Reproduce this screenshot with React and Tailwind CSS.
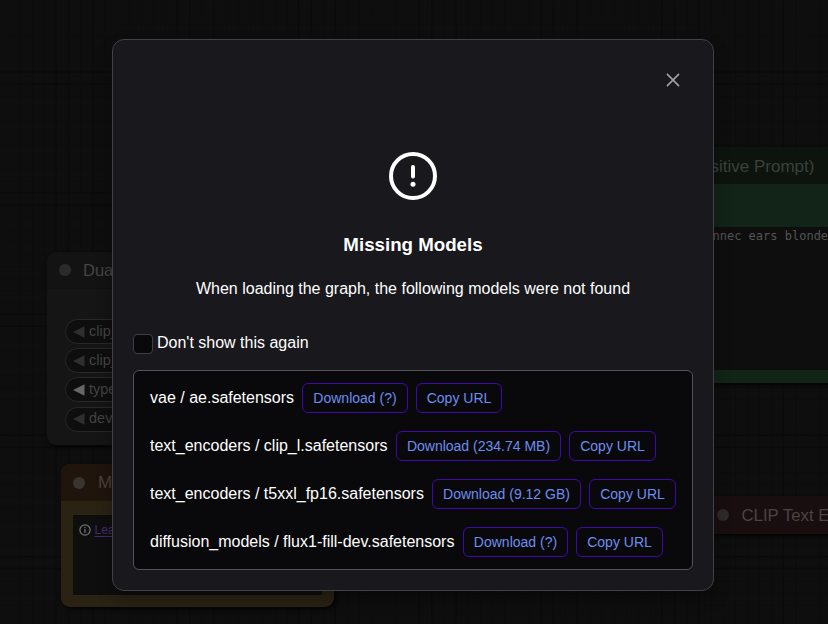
const models = [
  { name: "vae / ae.safetensors", size: "?", label: "w-[144px]", download: "w-[106px]", copy: "w-[86px]" },
  { name: "text_encoders / clip_l.safetensors", size: "234.74 MB", label: "w-[238px]", download: "w-[165px]", copy: "w-[87px]" },
  { name: "text_encoders / t5xxl_fp16.safetensors", size: "9.12 GB", label: "w-[274px]", download: "w-[149px]", copy: "w-[87px]" },
  { name: "diffusion_models / flux1-fill-dev.safetensors", size: "?", label: "w-[305px]", download: "w-[105px]", copy: "w-[87px]" },
];

const loaderRows = [
  { label: "clip_", arrow: "#2f2f2f" },
  { label: "clip_", arrow: "#2f2f2f" },
  { label: "type", arrow: "#666666" },
  { label: "dev", arrow: "#2f2f2f" },
];

// Graph canvas grid: fine cells with heavier lines once per block.
function Grid() {
  return (
    <svg className="absolute inset-0" width="828" height="624" aria-hidden="true">
      <defs>
        <pattern id="fine" x="7.7" y="-0.8" width="12.12" height="12.12" patternUnits="userSpaceOnUse">
          <path d="M0.5 0V12.12M0 0.5H12.12" stroke="#0c0c0c" strokeWidth="1" />
        </pattern>
        <pattern id="block" x="0" y="0" width="121.2" height="121.2" patternUnits="userSpaceOnUse">
          <path
            d="M56 0V121.2M68.3 0V121.2M92.5 0V121.2M0 71.7H121.2M0 83.8H121.2"
            stroke="#0a0a0a"
            strokeWidth="1.5"
          />
        </pattern>
      </defs>
      <rect width="828" height="624" fill="#0e0e0e" />
      <rect width="828" height="624" fill="url(#fine)" />
      <rect width="828" height="624" fill="url(#block)" />
    </svg>
  );
}

function LoaderNode() {
  return (
    <div className="absolute left-[47px] top-[252px] h-[193px] w-[240px] overflow-hidden rounded-[9px] bg-[#151515] shadow-[2px_2px_4px_#050505]">
      <div className="flex h-[37px] items-center gap-3 border-b border-[#101010] bg-[#131313] pl-3">
        <span className="size-3 rounded-full bg-[#2b2b2b]" />
        <span className="pt-px text-[16.5px] text-[#444444]">Dua</span>
      </div>
      <div className="flex flex-col gap-[4.2px] pl-[18px] pt-[30px]">
        {loaderRows.map((row, i) => (
          <div
            key={i}
            className="flex h-[25px] items-center gap-[4.5px] rounded-full border border-[#282828] bg-[#0e0e0e] pl-[6.5px] text-[14.5px] text-[#434343]"
          >
            <svg width="12" height="12" viewBox="0 0 12 12">
              <path d="M0 6L11.5 0.3V11.7Z" fill={row.arrow} />
            </svg>
            <span>{row.label}</span>
          </div>
        ))}
      </div>
    </div>
  );
}

function NoteNode() {
  return (
    <div className="absolute left-[61px] top-[464px] h-[143px] w-[273px] overflow-hidden rounded-[9px] bg-[#2a2213] shadow-[2px_2px_4px_#050505]">
      <div className="flex h-[37px] items-center gap-[13px] bg-[#20150d] pl-3">
        <span className="size-3 rounded-full bg-[#38342e]" />
        <span className="pt-px text-[17px] text-[#4a4239]">M</span>
      </div>
      <div className="ml-3 mt-[14px] flex h-[80px] w-[249px] items-start gap-[3.5px] bg-[#0e0e0e] pl-[6px] pt-[7px]">
        <svg className="mt-[2px]" width="12" height="12" viewBox="0 0 12 12" fill="none" stroke="#707070" strokeWidth="1.3">
          <circle cx="6" cy="6" r="5.1" />
          <path d="M6 5.1V9M6 3V4.2" />
        </svg>
        <span className="text-[12px] leading-4 text-[#442b6b] underline underline-offset-2">Lea</span>
      </div>
    </div>
  );
}

function PositivePromptNode() {
  return (
    <div className="absolute left-[600px] top-[147px] h-[236px] w-[260px] overflow-hidden rounded-[9px] bg-[#112417] shadow-[2px_2px_4px_#050505]">
      <div className="flex h-[37px] items-center bg-[#0c140d] pl-[110.5px]">
        <span className="pt-[3px] text-[17px] text-[#3a423b]">sitive Prompt)</span>
      </div>
      <div className="mt-[43px] h-[143px] bg-[#0e0e0e] pl-[112.5px] pt-[2px]">
        <span className="block whitespace-nowrap font-['DejaVu_Sans_Mono',monospace] text-[12px] leading-[14px] text-[#545454]">
          nnec ears blonde
        </span>
      </div>
    </div>
  );
}

function NegativePromptNode() {
  return (
    <div className="absolute left-[705px] top-[496px] flex h-[38px] w-[160px] items-center gap-3 rounded-[9px] bg-[#180e10] pl-3 shadow-[2px_2px_4px_#050505]">
      <span className="size-3 shrink-0 rounded-full bg-[#2e2a2a]" />
      <span className="whitespace-nowrap pl-[0.5px] pt-px text-[16.8px] text-[#4b4344]">CLIP Text E</span>
    </div>
  );
}

function LinkButton({ children, width }) {
  return (
    <button
      className={`h-[30px] shrink-0 rounded-md border border-[#4107ad] text-sm whitespace-nowrap text-[#6d8df0] ${width}`}
    >
      {children}
    </button>
  );
}

function MissingModelsDialog() {
  return (
    <section
      role="dialog"
      className="flex h-[552px] w-[602px] flex-col rounded-xl border border-[#414146] bg-[#18181d] p-5 text-white shadow-[0_8px_16px_rgba(0,0,0,0.3)]"
    >
      <header className="flex justify-end">
        <button className="flex size-10 items-center justify-center" aria-label="Close">
          <svg width="14" height="14" viewBox="0 0 14 14" fill="none" stroke="#a1a1aa" strokeWidth="1.6" strokeLinecap="round">
            <path d="M1.4 1.4L12.6 12.6M12.6 1.4L1.4 12.6" />
          </svg>
        </button>
      </header>
      <div className="flex flex-col items-center pt-[52px]">
        <svg width="48" height="48" viewBox="0 0 48 48" fill="none" stroke="white">
          <circle cx="24" cy="24" r="22" strokeWidth="4" />
          <path d="M24 15V24.6" strokeWidth="4" strokeLinecap="round" />
          <circle cx="24" cy="32.2" r="2.5" fill="white" stroke="none" />
        </svg>
        <h3 className="mt-[31px] text-[18.72px] font-bold leading-7">Missing Models</h3>
        <p className="mt-[18px] text-base leading-6">When loading the graph, the following models were not found</p>
      </div>
      <label className="mt-[30px] flex h-6 items-start gap-1">
        <span className="mt-[3px] size-5 rounded border border-[#3f3f46] bg-[#09090b]" />
        <span className="text-base leading-6">Don't show this again</span>
      </label>
      <ul className="mt-[15px] flex h-[200px] flex-col gap-[18px] rounded-md border border-[#52525b] bg-[#09090b] pl-4 pt-3">
        {models.map((model) => (
          <li key={model.name} className="flex h-[30px] items-center gap-2">
            <span className={`shrink-0 text-base leading-6 whitespace-nowrap ${model.label}`}>{model.name}</span>
            <LinkButton width={model.download}>Download ({model.size})</LinkButton>
            <LinkButton width={model.copy}>Copy URL</LinkButton>
          </li>
        ))}
      </ul>
    </section>
  );
}

export default function App() {
  return (
    <main className="relative h-[624px] w-[828px] overflow-hidden bg-[#0e0e0e] font-['Liberation_Sans',Arial,sans-serif]">
      <Grid />
      <LoaderNode />
      <NoteNode />
      <PositivePromptNode />
      <NegativePromptNode />
      <div className="relative flex pl-[112px] pt-[39px]">
        <MissingModelsDialog />
      </div>
    </main>
  );
}
